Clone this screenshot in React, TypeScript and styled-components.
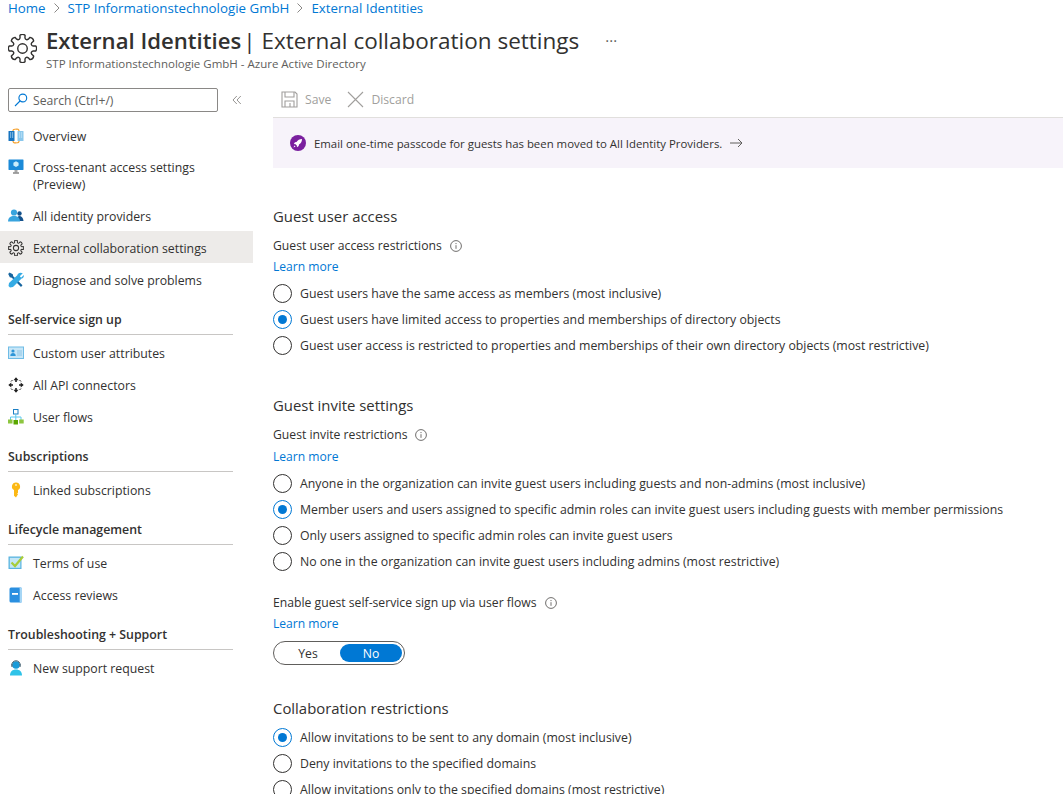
import React from "react";
import styled, { createGlobalStyle } from "styled-components";

const Global = createGlobalStyle`
  html, body { margin: 0; padding: 0; background: #fff; height: 794px; overflow: hidden; }
  body { font-family: "Open Sans", "Noto Sans", sans-serif; color: #323130; }
  * { box-sizing: border-box; }
`;
const Page = styled.div`width: 1063px; height: 794px; overflow: hidden; display: flex; flex-direction: column;`;
const Crumbs = styled.div`height: 15px; padding-left: 8px; display: flex; align-items: center; gap: 7px; font-size: 13.3px; color: #0078d4; line-height: 18px;`;
const Header = styled.div`height: 58px; display: flex; padding: 9px 0 0 8px;`;
const HeaderIcon = styled.span`margin-top: 10px; display: flex; align-self: flex-start;`;
const HeadText = styled.div`margin-left: 9px; display: flex; flex-direction: column;`;
const TitleRow = styled.div`display: flex; align-items: center; height: 32px; font-size: 22.5px; white-space: nowrap;`;
const TitleB = styled.span`font-weight: 600; font-size: 22.15px; margin-right: 2px;`;
const Dots = styled.span`margin-left: 26px; font-size: 15px; color: #605e5c; position: relative; top: 0; letter-spacing: 0;`;
const Sub = styled.div`font-size: 11.5px; color: #605e5c; line-height: 14px; margin-top: 1px;`;
const Body = styled.div`display: flex; flex: 1; min-height: 0;`;
const Side = styled.nav`width: 253px; flex: none; padding-top: 15px;`;
const SearchRow = styled.div`display: flex; align-items: center; padding-left: 8px; margin-bottom: 7px;`;
const SearchBox = styled.div`width: 210px; height: 24px; border: 1px solid #8a8886; border-radius: 2px; display: flex; align-items: center; padding-left: 5px; gap: 5px; font-size: 12.2px; color: #605e5c;`;
const Collapse = styled.span`margin-left: 14px; display: flex;`;
const Item = styled.div<{ $active?: boolean; $tall?: boolean }>`
  display: flex; align-items: flex-start; min-height: ${p => p.$tall ? 48 : 32}px; padding: ${p => p.$tall ? "8px" : "9px"} 8px 0 8px; gap: 9px;
  font-size: 12.3px; line-height: 17px; background: ${p => p.$active ? "#edebe9" : "transparent"};
`;
const ItemIcon = styled.span`width: 16px; height: 16px; flex: none; display: flex; svg { display: block; }`;
const Group = styled.div`margin: 0 20px 1px 8px; height: 40px; padding-top: 16px; border-bottom: 1px solid #c8c6c4; font-size: 12.35px; font-weight: 600; line-height: 17px;`;
const Main = styled.main`flex: 1; min-width: 0; padding: 0 0 0 20px;`;
const Toolbar = styled.div`height: 38px; display: flex; align-items: center; gap: 16px; margin-top: 7px; padding-top: 2px; border-bottom: 1px solid #e1dfdd; font-size: 12.2px; color: #a19f9d;`;
const ToolBtn = styled.div<{ $first?: boolean }>`display: flex; align-items: center; gap: 7px; padding-left: ${p => p.$first ? 8 : 0}px;`;
const Banner = styled.div`height: 50px; background: #f7f3fa; display: flex; align-items: center; padding-left: 17px; gap: 8px; font-size: 11.4px; color: #323130;`;
const SectionTitle = styled.h2<{ $top: number }>`margin: ${p => p.$top}px 0 0; font-size: 14.9px; font-weight: 400; line-height: 20px;`;
const FieldLabel = styled.div<{ $top?: number }>`display: flex; align-items: center; gap: 8px; font-size: 12.2px; line-height: 17px; margin-top: ${p => p.$top ?? 11}px;`;
const LearnMore = styled.div<{ $top?: number }>`font-size: 12.1px; line-height: 17px; color: #0078d4; margin-top: ${p => p.$top ?? 4}px;`;
const Radios = styled.div<{ $top?: number }>`display: flex; flex-direction: column; margin-top: ${p => p.$top ?? 5}px;`;
const RadioRow = styled.div`height: 26px; display: flex; align-items: center; gap: 8px; font-size: 12.3px; white-space: nowrap;`;
const RadioMark = styled.span<{ $on?: boolean }>`
  width: 19px; height: 19px; border-radius: 50%; flex: none; display: flex; align-items: center; justify-content: center;
  border: 1.4px solid ${p => p.$on ? "#0078d4" : "#323130"};
  &::after { content: ""; width: 9px; height: 9px; border-radius: 50%; background: ${p => p.$on ? "#0078d4" : "transparent"}; }
`;
const Toggle = styled.div`width: 132px; height: 24px; margin-top: 9px; border: 1px solid #605e5c; border-radius: 12px; display: flex; padding: 2px; font-size: 12.2px;`;
const ToggleOpt = styled.div<{ $on?: boolean }>`
  border-radius: 9px; display: flex; align-items: center; justify-content: center;
  background: ${p => p.$on ? "#0078d4" : "transparent"}; color: ${p => p.$on ? "#fff" : "#323130"};
  flex: 0 0 ${p => p.$on ? 62 : 64}px;
`;

const gearPath = (() => {
  const pt = (r: number, deg: number) => {
    const a = (deg * Math.PI) / 180;
    return `${(14 + r * Math.cos(a)).toFixed(2)} ${(14 + r * Math.sin(a)).toFixed(2)}`;
  };
  let d = `M${pt(9.4, -22.5)}`;
  for (let i = 0; i < 8; i++) {
    const mid = 45 * i;
    d += `Q${pt(9.2, mid - 17)} ${pt(10.6, mid - 13)}`;
    d += `L${pt(13, mid - 11)}`;
    d += `Q${pt(14.6, mid)} ${pt(13, mid + 11)}`;
    d += `L${pt(10.6, mid + 13)}`;
    d += `Q${pt(9.2, mid + 17)} ${pt(9.4, mid + 22.5)}`;
  }
  return d + "Z";
})();

const Gear = ({ size, color = "#323130" }: { size: number; color?: string }) => (
  <svg width={size} height={size} viewBox="0 0 28 28" fill="none" stroke={color} strokeWidth={size > 20 ? 1.35 : 1.8} strokeLinejoin="round">
    <path d={gearPath} />
    <circle cx="14" cy="14" r="4.6" />
  </svg>
);
const Chevron = () => <svg width="8" height="10" viewBox="0 0 8 10" fill="none" stroke="#8a8886"><path d="M1.5 .5 6 5 1.5 9.5" /></svg>;
const Overview = () => (
  <svg width="16" height="16" viewBox="0 0 16 16"><path d="M7.5 1.300C9.500 .6 11 1.500 11 3M8.500 14.700C6.500 15.400 5 14.500 5 13" stroke="#f59d23" strokeWidth="1.200" fill="none" /><path d="M8.500 14.700C10.500 15 11 14 11 13M7.500 1.300C5.500 1 5 2 5 3" stroke="#f59d23" strokeWidth="1.200" fill="none" /><rect x="0.500" y="3" width="6" height="10" rx=".6" fill="#1774c0" /><rect x="9.500" y="3" width="6" height="10" rx=".6" fill="#8ac7ec" /><path d="M2 5h1.200M4 5h1.200M2 7h1.200M4 7h1.200M2 9h1.200M4 9h1.200M11 5h1.200M13 5h1.200M11 7h1.200M13 7h1.200M11 9h1.200M13 9h1.200" stroke="#d4ecfa" strokeWidth="1" /></svg>
);
const Monitor = () => (
  <svg width="16" height="16" viewBox="0 0 16 16"><rect x="0.500" y="0.500" width="15" height="10.500" rx=".4" fill="#1b8ad8" /><path d="M8 2.200l2.600 1.500v2.900L8 8.100 5.400 6.600V3.700z" fill="#c9ecfb" /><rect x="6.500" y="11" width="3" height="2.500" fill="#a8a8a8" /><rect x="5" y="13.300" width="6" height="1.400" fill="#7f7f7f" /></svg>
);
const People = () => (
  <svg width="16" height="16" viewBox="0 0 16 16"><circle cx="11.500" cy="5.500" r="2.200" fill="#14528c" /><path d="M8.500 13c.2-3.500 1.300-5 3-5s3.800 1.500 4 5z" fill="#14528c" /><circle cx="6" cy="4.500" r="3.100" fill="#39a4de" /><path d="M0 13.500c.2-4 2.500-5.500 6-5.500s5.800 1.500 6 5.500z" fill="#39a4de" /></svg>
);
const Tools = () => (
  <svg width="16" height="16" viewBox="0 0 16 16"><path d="M1.500 .5l3.300 1.800.4 2L14.500 13.300 13 15 3.800 5.700l-2-.4L.2 2z" fill="#17659f" /><path d="M14.800 1.200l-2.800 2.800.3 1 1 .4 2.500-2.500c.3 1.700-.4 3.200-2.200 3.700L5 15 2 15.500.5 14l.5-3 8.300-7.800c.5-2.200 3-3.200 5.500-2z" fill="#35abe4" /></svg>
);
const Card = () => (
  <svg width="16" height="16" viewBox="0 0 16 16"><rect x=".5" y="2" width="15" height="11.500" fill="#c7e6f7" stroke="#6fbce6" /><circle cx="5" cy="6" r="1.600" fill="#2f96d8" /><path d="M2.300 11c0-2.200 1.300-3 2.700-3s2.700.8 2.700 3z" fill="#2f96d8" /><path d="M9 6h5M9 8h5M9 10h5" stroke="#8fc4e4" /></svg>
);
const Connectors = () => (
  <svg width="16" height="16" viewBox="0 0 16 16" fill="#1f1f1f"><path d="M8 .3L10.500 3.300H8.800V5H7.200V3.300H5.500zM8 15.700L5.500 12.700H7.200V11H8.800V12.700H10.500zM.3 8L3.300 5.500V7.200H5V8.800H3.300V10.500zM15.700 8L12.700 10.500V8.800H11V7.200H12.700V5.500z" /><path d="M3 4.500L4.500 3M13 4.500L11.500 3M3 11.500L4.500 13M13 11.500L11.500 13" stroke="#1f1f1f" fill="none" /></svg>
);
const Flows = () => (
  <svg width="16" height="16" viewBox="0 0 16 16"><rect x="5.500" y=".5" width="4.500" height="4.500" fill="#fff" stroke="#1b7fc4" /><path d="M7.800 5v6M2.500 11V8h10.500v3" stroke="#5cc8ef" fill="none" /><rect y="10.500" width="4.500" height="4" fill="#8dc63f" /><rect x="5.500" y="11" width="4.500" height="4.500" fill="#5aa700" /><rect x="11.200" y="10.500" width="4.500" height="4" fill="#8dc63f" /></svg>
);
const Key = () => (
  <svg width="16" height="16" viewBox="0 0 16 16"><path d="M8 .5a4 4 0 0 1 2 7.500v2.800l-.8.800.8.900-.8 1L8 15.500 6 13.800V8A4 4 0 0 1 8 .5z" fill="#fcb814" /><circle cx="8" cy="3" r=".9" fill="#fff3c9" /></svg>
);
const Terms = () => (
  <svg width="16" height="16" viewBox="0 0 16 16"><rect x=".5" y="1.500" width="13" height="12.500" fill="#59b4e0" /><rect x="1.800" y="2.800" width="10.500" height="10" fill="#c4e6f6" /><path d="M3.500 7.500l3.500 3.500L15 1.500" stroke="#a7cc3a" strokeWidth="2.200" fill="none" /></svg>
);
const Book = () => (
  <svg width="16" height="16" viewBox="0 0 16 16"><rect x="1.500" y=".5" width="12.500" height="15" rx="1.500" fill="#2a8fe0" /><rect x="11.700" y=".5" width="2.300" height="15" rx=".8" fill="#a6d6f5" /><rect x="4" y="6" width="6" height="1.800" fill="#fff" /></svg>
);
const Support = () => (
  <svg width="16" height="16" viewBox="0 0 16 16"><circle cx="8" cy="5" r="3.800" fill="#1a9bd8" /><path d="M2 15.500c0-4 2.500-6 6-6s6 2 6 6z" fill="#2fc3e8" /><path d="M3.800 5a4.200 4.200 0 0 1 8.400 0" stroke="#3b5a6b" fill="none" strokeWidth="1" /><rect x="11.500" y="4.500" width="1.200" height="2.300" fill="#3b5a6b" /><rect x="3.300" y="4.500" width="1.200" height="2.300" fill="#3b5a6b" /></svg>
);
const Info = () => (
  <svg width="12" height="12" viewBox="0 0 12 12" fill="none" stroke="#605e5c" strokeWidth=".9"><circle cx="6" cy="6" r="5.400" /><path d="M6 5.200v3.600M6 3v1.100" /></svg>
);
const SearchIcon = () => (
  <svg width="14" height="14" viewBox="0 0 14 14" fill="none" stroke="#0078d4" strokeWidth="1.100"><circle cx="8.800" cy="5" r="3.900" /><path d="M6 8L1 13" /></svg>
);
const DblChev = () => (
  <svg width="10" height="10" viewBox="0 0 10 10" fill="none" stroke="#8a8886" strokeWidth=".9"><path d="M4.800 1L1 5l3.800 4M8.800 1L5 5l3.800 4" /></svg>
);
const Save = () => (
  <svg width="17" height="17" viewBox="0 0 17 17" fill="none" stroke="#a19f9d" strokeWidth="1.100"><path d="M1 1h13l2 2v13H1z" /><path d="M4 1v5h9V1M4 16v-6h9v6M9 12v4" /></svg>
);
const Close = () => (
  <svg width="17" height="17" viewBox="0 0 17 17" fill="none" stroke="#a19f9d" strokeWidth="1.100"><path d="M1 1l15 15M16 1L1 16" /></svg>
);
const Rocket = () => (
  <svg width="16" height="16" viewBox="0 0 16 16"><circle cx="8" cy="8" r="8" fill="#7a1f9e" /><path d="M12 4c-2.500 0-4.200 1-5.500 3L5 7.300 3.800 9l1.800.2 1.200 1.200L7 12.200l1.700-1.200.3-1.500c2-1.300 3-3 3-5.500z" fill="#fff" /><path d="M4.500 10.500l-1 2 2-1z" fill="#fff" /></svg>
);
const Arrow = () => (
  <svg width="13" height="10" viewBox="0 0 13 10" fill="none" stroke="#605e5c" strokeWidth="1"><path d="M0 5h12M8 1l4 4-4 4" /></svg>
);

const Nav = ({ icon, children, active, tall }: { icon: React.ReactNode; children: React.ReactNode; active?: boolean; tall?: boolean }) => (
  <Item $active={active} $tall={tall}><ItemIcon>{icon}</ItemIcon><span>{children}</span></Item>
);
const Radio = ({ on, children }: { on?: boolean; children: React.ReactNode }) => (
  <RadioRow><RadioMark $on={on} />{children}</RadioRow>
);
const TenantName = "STP Informationstechnologie GmbH";

export default function App() {
  return (
    <Page>
      <Global />
      <Crumbs><span>Home</span><Chevron /><span>{TenantName}</span><Chevron /><span>External Identities</span></Crumbs>
      <Header>
        <HeaderIcon><Gear size={29} /></HeaderIcon>
        <HeadText>
          <TitleRow><TitleB>External Identities</TitleB>| External collaboration settings<Dots>···</Dots></TitleRow>
          <Sub>{TenantName} - Azure Active Directory</Sub>
        </HeadText>
      </Header>
      <Body>
        <Side>
          <SearchRow>
            <SearchBox><SearchIcon />Search (Ctrl+/)</SearchBox>
            <Collapse><DblChev /></Collapse>
          </SearchRow>
          <Nav icon={<Overview />}>Overview</Nav>
          <Nav icon={<Monitor />} tall>Cross-tenant access settings<br />(Preview)</Nav>
          <Nav icon={<People />}>All identity providers</Nav>
          <Nav icon={<Gear size={16} />} active>External collaboration settings</Nav>
          <Nav icon={<Tools />}>Diagnose and solve problems</Nav>
          <Group>Self-service sign up</Group>
          <Nav icon={<Card />}>Custom user attributes</Nav>
          <Nav icon={<Connectors />}>All API connectors</Nav>
          <Nav icon={<Flows />}>User flows</Nav>
          <Group>Subscriptions</Group>
          <Nav icon={<Key />}>Linked subscriptions</Nav>
          <Group>Lifecycle management</Group>
          <Nav icon={<Terms />}>Terms of use</Nav>
          <Nav icon={<Book />}>Access reviews</Nav>
          <Group>Troubleshooting + Support</Group>
          <Nav icon={<Support />}>New support request</Nav>
        </Side>
        <Main>
          <Toolbar>
            <ToolBtn $first><Save />Save</ToolBtn>
            <ToolBtn><Close />Discard</ToolBtn>
          </Toolbar>
          <Banner><Rocket />Email one-time passcode for guests has been moved to All Identity Providers.<Arrow /></Banner>
          <SectionTitle $top={38}>Guest user access</SectionTitle>
          <FieldLabel>Guest user access restrictions <Info /></FieldLabel>
          <LearnMore>Learn more</LearnMore>
          <Radios>
            <Radio>Guest users have the same access as members (most inclusive)</Radio>
            <Radio on>Guest users have limited access to properties and memberships of directory objects</Radio>
            <Radio>Guest user access is restricted to properties and memberships of their own directory objects (most restrictive)</Radio>
          </Radios>
          <SectionTitle $top={37}>Guest invite settings</SectionTitle>
          <FieldLabel>Guest invite restrictions <Info /></FieldLabel>
          <LearnMore $top={5}>Learn more</LearnMore>
          <Radios>
            <Radio>Anyone in the organization can invite guest users including guests and non-admins (most inclusive)</Radio>
            <Radio on>Member users and users assigned to specific admin roles can invite guest users including guests with member permissions</Radio>
            <Radio>Only users assigned to specific admin roles can invite guest users</Radio>
            <Radio>No one in the organization can invite guest users including admins (most restrictive)</Radio>
          </Radios>
          <FieldLabel $top={20}>Enable guest self-service sign up via user flows <Info /></FieldLabel>
          <LearnMore>Learn more</LearnMore>
          <Toggle><ToggleOpt>Yes</ToggleOpt><ToggleOpt $on>No</ToggleOpt></Toggle>
          <SectionTitle $top={33}>Collaboration restrictions</SectionTitle>
          <Radios $top={6}>
            <Radio on>Allow invitations to be sent to any domain (most inclusive)</Radio>
            <Radio>Deny invitations to the specified domains</Radio>
            <Radio>Allow invitations only to the specified domains (most restrictive)</Radio>
          </Radios>
        </Main>
      </Body>
    </Page>
  );
}
